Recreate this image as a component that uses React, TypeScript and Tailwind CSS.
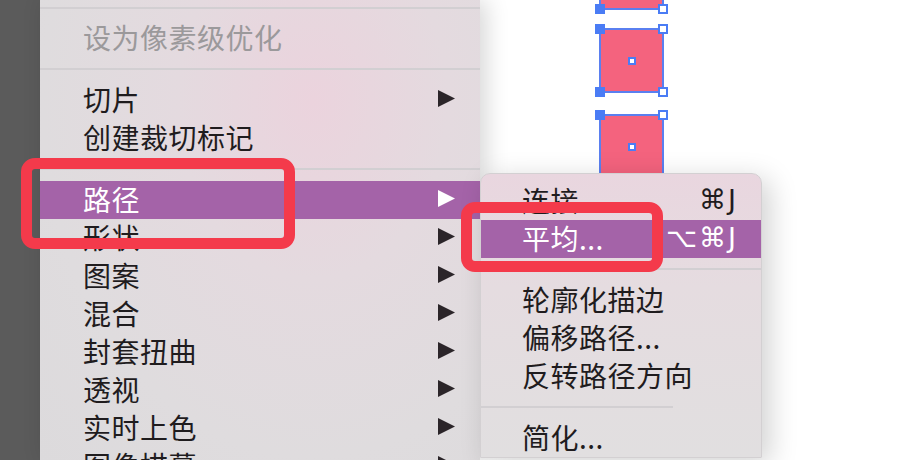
import React from "react";

type Item = { label: string; arrow?: boolean; disabled?: boolean; active?: boolean; shortcut?: string };

const Arrow: React.FC<{ light?: boolean }> = ({ light }) => (
    <svg width="17" height="17" viewBox="0 0 17 17">
        <polygon points="0,0 17,8.5 0,17" fill={light ? "#ffffff" : "#2b2529"} />
    </svg>
);

const Row: React.FC<{ item: Item; left: string; right: string }> = ({ item, left, right }) => (
    <div
        className={`flex h-[38px] shrink-0 items-center justify-between pb-[3px] ${left} ${right} text-[28px] leading-none ${
            item.active ? "bg-[#a463a8] text-white" : item.disabled ? "text-[#9b999b]" : "text-[#1f1c1e]"
        }`}
    >
        <span className="tracking-[0.5px]">{item.label}</span>
        {item.arrow && <Arrow light={item.active} />}
        {item.shortcut && (
            <span className="font-['DejaVu_Sans',sans-serif] text-[27px] tracking-[2px]">{item.shortcut}</span>
        )}
    </div>
);

const Sep: React.FC<{ top?: string; bottom?: string; width?: string }> = ({ top = "pt-[11px]", bottom = "pb-[11px]", width = "w-full" }) => (
    <div className={`shrink-0 ${top} ${bottom}`}>
        <div className={`h-[2px] ${width} bg-[#d2cfd2]`} />
    </div>
);

const mainTop: Item[] = [{ label: "切片", arrow: true }, { label: "创建裁切标记" }];
const mainBottom: Item[] = [
    { label: "路径", arrow: true, active: true },
    { label: "形状", arrow: true },
    { label: "图案", arrow: true },
    { label: "混合", arrow: true },
    { label: "封套扭曲", arrow: true },
    { label: "透视", arrow: true },
    { label: "实时上色", arrow: true },
    { label: "图像描摹", arrow: true },
];

const Square: React.FC<{ top: string }> = ({ top }) => (
    <div className={`absolute left-[119px] ${top} h-[65px] w-[65px] border-2 border-[#5a7ff0] bg-[#f4637e]`}>
        <div className="absolute -left-[6px] -top-[6px] h-[10px] w-[10px] bg-[#4a7cf5]" />
        <div className="absolute -right-[6px] -top-[6px] h-[10px] w-[10px] border-2 border-[#4a7cf5] bg-white" />
        <div className="absolute -bottom-[6px] -left-[6px] h-[10px] w-[10px] bg-[#4a7cf5]" />
        <div className="absolute -bottom-[6px] -right-[6px] h-[10px] w-[10px] border-2 border-[#4a7cf5] bg-white" />
        <div className="absolute left-[27px] top-[27px] h-[8px] w-[8px] border-2 border-[#4a7cf5] bg-white" />
    </div>
);

export default function App() {
    return (
        <div className="relative flex h-[460px] w-[908px] overflow-hidden bg-white font-['Noto_Sans_CJK_SC',sans-serif]">
            {/* dark strip */}
            <div className="w-[40px] shrink-0 bg-[#5b5b5b]" />

            {/* main menu */}
            <div className="z-10 flex w-[440px] shrink-0 flex-col bg-[radial-gradient(ellipse_at_62%_22%,#ebd3dd_0%,#e4dadf_35%,#dfdcde_70%,#dcdadc_100%)] shadow-[6px_0_22px_rgba(0,0,0,0.16)]">
                <Sep top="pt-[7px]" bottom="pb-[10px]" />
                <Row item={{ label: "设为像素级优化", disabled: true }} left="pl-[43px]" right="pr-[25px]" />
                <Sep />
                {mainTop.map((it) => (
                    <Row key={it.label} item={it} left="pl-[43px]" right="pr-[25px]" />
                ))}
                <Sep />
                {mainBottom.map((it) => (
                    <Row key={it.label} item={it} left="pl-[43px]" right="pr-[25px]" />
                ))}
            </div>

            {/* canvas */}
            <div className="relative flex-1">
                <Square top="-top-[55px]" />
                <Square top="top-[28px]" />
                <Square top="top-[114px]" />
            </div>

            {/* submenu */}
            <div className="absolute left-[480px] top-[173px] z-20 flex w-[282px] flex-col rounded-t-[10px] border border-[#d3d0d2] bg-[linear-gradient(180deg,#e9d6df_0%,#e5dce0_40%,#e1dfe0_100%)] pt-[8px] shadow-[8px_6px_28px_rgba(0,0,0,0.18)]">
                <Row item={{ label: "连接", shortcut: "⌘J" }} left="pl-[41px]" right="pr-[23px]" />
                <Row item={{ label: "平均...", shortcut: "⌥⌘J", active: true }} left="pl-[41px]" right="pr-[23px]" />
                <Sep top="pt-[10px]" bottom="pb-[11px]" />
                <Row item={{ label: "轮廓化描边" }} left="pl-[41px]" right="pr-[23px]" />
                <Row item={{ label: "偏移路径..." }} left="pl-[41px]" right="pr-[23px]" />
                <Row item={{ label: "反转路径方向" }} left="pl-[41px]" right="pr-[23px]" />
                <Sep width="w-[192px]" />
                <Row item={{ label: "简化..." }} left="pl-[41px]" right="pr-[23px]" />
            </div>

            {/* annotation boxes */}
            <div className="absolute left-[21px] top-[158px] z-30 h-[91px] w-[274px] rounded-[14px] border-[11px] border-[#f43a4b]" />
            <div className="absolute left-[461px] top-[202px] z-30 h-[70px] w-[202px] rounded-[14px] border-[11px] border-[#f43a4b]" />
        </div>
    );
}
